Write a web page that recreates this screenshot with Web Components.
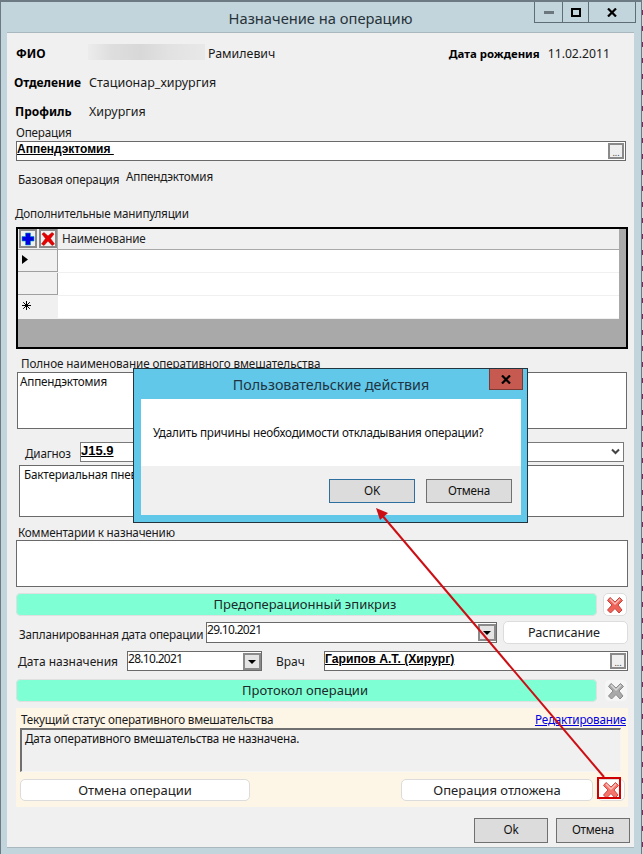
<!DOCTYPE html>
<html lang="ru">
<head>
<meta charset="utf-8">
<title>Назначение на операцию</title>
<style>
  html, body { margin: 0; padding: 0; width: 643px; height: 854px; overflow: hidden; }
  html { background: repeating-linear-gradient(#d8d8d8 0 10px, #7d2a5c 10px 15px, #d8d8d8 15px 16px); }
  body { font: 11.7px "Noto Sans", "Open Sans", sans-serif; letter-spacing: -.2px; color: #111; }
</style>
</head>
<body>

<op-window heading="Назначение на операцию">
  <form-row h="29" top="6">
    <field-text bold size="12" w="72" x="9" style="letter-spacing:0">ФИО</field-text>
    <field-text size="12.4" x="120" style="letter-spacing:0">Рамилевич</field-text>
    <field-text bold size="11.4" x="242" style="margin-left:auto;letter-spacing:0">Дата рождения</field-text>
    <field-text size="12.2" x="8" style="margin-right:24px;letter-spacing:0">11.02.2011</field-text>
  </form-row>
  <form-row h="29">
    <field-text bold size="12" x="7" w="75" style="letter-spacing:0">Отделение</field-text>
    <field-text size="12.5" style="letter-spacing:0">Стационар_хирургия</field-text>
  </form-row>
  <form-row h="29">
    <field-text bold size="12" x="8" w="74" style="letter-spacing:0">Профиль</field-text>
    <field-text size="12.5" style="letter-spacing:0">Хирургия</field-text>
  </form-row>
  <form-row h="14"><field-text x="9">Операция</field-text></form-row>
  <form-row h="20" top="1">
    <lookup-box x="9" w="610" bold>Аппендэктомия&nbsp;</lookup-box>
  </form-row>
  <form-row h="18" top="10">
    <field-text x="11" w="108">Базовая операция</field-text>
    <field-text style="position:relative;top:-3px">Аппендэктомия</field-text>
  </form-row>
  <form-row h="14" top="18"><field-text x="8">Дополнительные манипуляции</field-text></form-row>
  <form-row h="122" top="6"><manip-grid></manip-grid></form-row>
  <form-row h="14" top="8"><field-text x="14" style="letter-spacing:-.1px">Полное наименование оперативного вмешательства</field-text></form-row>
  <form-row h="57" top="1"><text-box x="10" w="610">Аппендэктомия</text-box></form-row>
  <form-row h="20" top="13">
    <field-text x="18" w="55" style="position:relative;top:2px">Диагноз</field-text>
    <combo-box w="544">J15.9</combo-box>
  </form-row>
  <form-row h="52" top="3"><text-box x="12" w="605" style="padding-left:4px">Бактериальная пневмония неуточненная</text-box></form-row>
  <form-row h="14" top="9"><field-text x="11">Комментарии к назначению</field-text></form-row>
  <form-row h="47"><text-box x="9" w="612"></text-box></form-row>
  <form-row h="23" top="6">
    <tint-button x="9" w="581">Предоперационный эпикриз</tint-button>
    <cross-button w="24" style="margin-left:6px"></cross-button>
  </form-row>
  <form-row h="23" top="5">
    <field-text size="11.7" x="12" w="187" style="position:relative;top:1px">Запланированная дата операции</field-text>
    <date-box w="291" style="height:21px">29.10.2021</date-box>
    <plain-button w="125" style="margin-left:6px">Расписание</plain-button>
  </form-row>
  <form-row h="20" top="7">
    <field-text size="12" x="11" w="109" style="position:relative;top:1px;letter-spacing:0">Дата назначения</field-text>
    <date-box w="135">28.10.2021</date-box>
    <field-text size="12" x="14" w="48" style="position:relative;top:1px;letter-spacing:0">Врач</field-text>
    <lookup-box w="304" bold style="font-size:12.2px">Гарипов А.Т. (Хирург)</lookup-box>
  </form-row>
  <form-row h="23" top="8">
    <tint-button x="9" w="581">Протокол операции</tint-button>
    <cross-button w="24" muted style="margin-left:7px"></cross-button>
  </form-row>
  <status-panel></status-panel>
  <form-row h="25" top="11" style="justify-content:flex-end;padding-right:4px">
    <flat-button w="74">Ok</flat-button>
    <flat-button w="74" style="margin-left:8px">Отмена</flat-button>
  </form-row>
</op-window>

<redact-patch></redact-patch>
<confirm-dialog heading="Пользовательские действия">Удалить причины необходимости откладывания операции?</confirm-dialog>
<pointer-arrow></pointer-arrow>

<script>
// red/grey cross used on the small toolbar buttons
const CROSS = (fill, edge) => `<svg width="18" height="18" viewBox="0 0 18 18"><path d="M4 1.500 9 6l4.500-4.500 3 3L12 9l4 5-3 3-4-4.500L4.500 17l-3-3L6 9 1.500 4.500z" fill="${fill}" stroke="${edge}" stroke-width="1"/><path d="M4 3 9 8l5-5" fill="none" stroke="#fff" stroke-opacity=".55" stroke-width="1.500"/></svg>`;

function sizeAttrs(el) {
  const x = el.getAttribute('x');
  const w = el.getAttribute('w');
  const size = el.getAttribute('size');
  if (x) el.style.marginLeft = el.style.marginLeft || x + 'px';
  if (w) el.style.width = w + 'px';
  if (size) el.style.fontSize = size + 'px';
}

class OpWindow extends HTMLElement {
  constructor() {
    super();
    this.attachShadow({ mode: 'open' });
    this.shadowRoot.innerHTML = `
      <style>
        :host { display: block; width: 642px; height: 854px; box-sizing: border-box; background: #c3d5dc; border-top: 2px solid #6c7a83; border-left: 1px solid #6c7a83; border-right: 1px solid #6c7a83; position: relative; padding: 0 7px 0 6px; }
        .title { height: 31px; box-sizing: border-box; display: flex; align-items: center; justify-content: center; font-size: 14.700px; letter-spacing: 0; color: #27333a; padding-top: 1px; }
        .ctl { position: absolute; top: 0; right: 5px; height: 21px; box-sizing: border-box; display: flex; border: 1px solid #5f6d75; border-top: 0; }
        .ctl span { display: flex; align-items: center; justify-content: center; }
        .ctl span + span { border-left: 1px solid #5f6d75; }
        .client { height: 814px; background: #f0f0f0; box-shadow: 0 -1px 0 #a9b8bf, 0 1px 0 #a9b8bf; display: flow-root; }
      </style>
      <div class="title">${this.getAttribute('heading')}</div>
      <div class="ctl">
        <span style="width:27px"><svg width="10" height="3"><rect width="10" height="3" fill="#6b777d"/></svg></span>
        <span style="width:25px"><svg width="10" height="9"><rect x="1" y="1" width="8" height="7" fill="none" stroke="#000" stroke-width="2"/></svg></span>
        <span style="width:46px"><svg width="10" height="9" viewBox="0 0 10 9"><path d="M1 .500 9 8.500M9 .500 1 8.500" stroke="#000" stroke-width="2.200"/></svg></span>
      </div>
      <div class="client"><slot></slot></div>`;
  }
}

class FormRow extends HTMLElement {
  constructor() {
    super();
    this.attachShadow({ mode: 'open' });
    this.shadowRoot.innerHTML = `<style>:host { display: flex; align-items: center; box-sizing: border-box; }</style><slot></slot>`;
  }
  connectedCallback() {
    this.style.height = this.getAttribute('h') + 'px';
    this.style.marginTop = (this.getAttribute('top') || 0) + 'px';
  }
}

class FieldText extends HTMLElement {
  constructor() {
    super();
    this.attachShadow({ mode: 'open' });
    this.shadowRoot.innerHTML = `
      <style>
        :host { display: block; flex: none; white-space: nowrap; font-size: 11.700px; line-height: 14px; margin-bottom: 2px; color: #1a1a1a; }
        :host([size]) { margin-bottom: 0; }
        :host([bold]) { font-weight: 700; color: #000; }
      </style><slot></slot>`;
  }
  connectedCallback() { sizeAttrs(this); }
}

class LookupBox extends HTMLElement {
  constructor() {
    super();
    this.attachShadow({ mode: 'open' });
    this.shadowRoot.innerHTML = `
      <style>
        :host { display: flex; flex: none; height: 20px; box-sizing: border-box; background: #fff; border: 1px solid #6a6a6a; position: relative; font-size: 12px; line-height: 14px; letter-spacing: 0; }
        :host([bold]) .t { font-weight: 700; text-decoration: underline; color: #000; font-family: "Liberation Sans", sans-serif; }
        .dots { position: absolute; right: 1px; top: 1px; width: 16px; height: 16px; box-sizing: border-box; background: #efefef; border: 2px solid #8a8a8a; color: #444; font: 9px/15px "Noto Sans", sans-serif; text-align: center; }
      </style>
      <span class="t"><slot></slot></span><span class="dots">...</span>`;
  }
  connectedCallback() { sizeAttrs(this); }
}

class TextBox extends HTMLElement {
  constructor() {
    super();
    this.attachShadow({ mode: 'open' });
    this.shadowRoot.innerHTML = `
      <style>
        :host { display: block; flex: none; height: 100%; box-sizing: border-box; background: #fff; border: 1px solid #6a6a6a; padding: 1px 2px; font-size: 11.700px; line-height: 14px; color: #111; }
      </style><slot></slot>`;
  }
  connectedCallback() { sizeAttrs(this); }
}

class ComboBox extends HTMLElement {
  constructor() {
    super();
    this.attachShadow({ mode: 'open' });
    this.shadowRoot.innerHTML = `
      <style>
        :host { display: flex; flex: none; height: 20px; box-sizing: border-box; background: #fff; border: 1px solid #7a7a7a; justify-content: space-between; font: 700 13px/16px "Liberation Sans", sans-serif; letter-spacing: 0; text-decoration: underline; color: #000; }
        svg { margin: 5px 3px 0 0; }
      </style>
      <span><slot></slot></span>
      <svg width="9" height="7" viewBox="0 0 9 7"><path d="M1 1.500 4.500 5 8 1.500" fill="none" stroke="#444" stroke-width="2"/></svg>`;
  }
  connectedCallback() { sizeAttrs(this); }
}

class DateBox extends HTMLElement {
  constructor() {
    super();
    this.attachShadow({ mode: 'open' });
    this.shadowRoot.innerHTML = `
      <style>
        :host { display: flex; flex: none; height: 20px; box-sizing: border-box; background: #fff; border: 1px solid #6a6a6a; position: relative; font-size: 12px; letter-spacing: -.7px; line-height: 14px; }
        .b { position: absolute; right: 0; top: 1px; width: 18px; height: 17px; box-sizing: border-box; background: #e4e4e4; border: 2px solid #8a8a8a; display: flex; align-items: center; justify-content: center; }
      </style>
      <span><slot></slot></span>
      <span class="b"><svg width="8" height="4"><path d="M0 0h8L4 4z" fill="#000"/></svg></span>`;
  }
  connectedCallback() { sizeAttrs(this); }
}

class TintButton extends HTMLElement {
  constructor() {
    super();
    this.attachShadow({ mode: 'open' });
    this.shadowRoot.innerHTML = `
      <style>
        :host { display: flex; flex: none; height: 23px; box-sizing: border-box; align-items: center; justify-content: center; padding: 0 3px 2px 0; background: #7fffd4; border-radius: 5px; box-shadow: 0 0 0 1px #e0e0e0 inset; font-size: 13px; letter-spacing: 0; color: #1e2a2a; }
      </style><slot></slot>`;
  }
  connectedCallback() { sizeAttrs(this); }
}

class PlainButton extends HTMLElement {
  constructor() {
    super();
    this.attachShadow({ mode: 'open' });
    this.shadowRoot.innerHTML = `
      <style>
        :host { display: flex; flex: none; height: 23px; box-sizing: border-box; align-items: center; justify-content: center; padding: 0 3px 2px 0; background: #fff; border: 1px solid #dcdcdc; border-radius: 5px; font-size: 12.700px; letter-spacing: 0; color: #222; }
      </style><slot></slot>`;
  }
  connectedCallback() { sizeAttrs(this); }
}

class CrossButton extends HTMLElement {
  constructor() {
    super();
    this.attachShadow({ mode: 'open' });
    const muted = this.hasAttribute('muted');
    this.shadowRoot.innerHTML = `
      <style>
        :host { display: flex; flex: none; height: 23px; box-sizing: border-box; align-items: center; justify-content: center; background: ${muted ? '#f6f6f6' : '#fff'}; border: 1px solid ${muted ? '#f0f0f0' : '#dcdcdc'}; border-radius: 5px; }
      </style>${muted ? CROSS('#a9a9a9', '#8a8a8a') : CROSS('#ee6257', '#c8423a')}`;
  }
  connectedCallback() { sizeAttrs(this); }
}

class FlatButton extends HTMLElement {
  constructor() {
    super();
    this.attachShadow({ mode: 'open' });
    this.shadowRoot.innerHTML = `
      <style>
        :host { display: flex; flex: none; height: 25px; box-sizing: border-box; align-items: center; justify-content: center; padding-bottom: 3px; background: #dcdcdc; border: 1px solid #707070; font-size: 11.700px; color: #111; }
      </style><slot></slot>`;
  }
  connectedCallback() { sizeAttrs(this); }
}

class ManipGrid extends HTMLElement {
  constructor() {
    super();
    this.attachShadow({ mode: 'open' });
    const row = (mark, h, last) => `
      <div class="row" style="height:${h}px">
        <div class="rh${last ? ' last' : ''}">${mark}</div>
        <div class="cell"></div>
      </div>`;
    this.shadowRoot.innerHTML = `
      <style>
        :host { display: block; flex: none; margin-left: 9px; width: 612px; height: 122px; box-sizing: border-box; border: 2px solid #000; background: #a9a9a9; font-size: 11.700px; }
        .head { height: 21px; width: 601px; display: flex; background: #f0f0f0; box-sizing: border-box; border-bottom: 1px solid #a9a9a9; }
        .tools { width: 40px; flex: none; display: flex; gap: 2px; padding: 0 0 0 1px; box-sizing: border-box; border-right: 1px solid #a9a9a9; }
        .tool { width: 18px; height: 19px; box-sizing: border-box; border: 2px solid #8a8a8a; background: #f0f0f0; display: flex; align-items: center; justify-content: center; }
        .name { padding-left: 4px; line-height: 18px; color: #222; }
        .row { display: flex; width: 601px; border-bottom: 1px solid #f0f0f0; box-sizing: border-box; }
        .rh { width: 40px; flex: none; background: #f0f0f0; box-sizing: border-box; border-right: 1px solid #a0a0a0; border-bottom: 1px solid #a0a0a0; padding-left: 4px; height: 100%; line-height: 18px; }
        .rh.last { border: 0; }
        .cell { flex: 1; background: #fff; }
      </style>
      <div class="head">
        <div class="tools">
          <span class="tool"><svg width="14" height="14" viewBox="0 0 14 14"><path d="M4.500 1h5v3.500H13v4.500H9.500v4h-5V9H1V4.500h3.500z" fill="#0000e0" stroke="#00a0c0" stroke-width=".6"/></svg></span>
          <span class="tool"><svg width="14" height="14" viewBox="0 0 14 14"><path d="M1 2 3 .500 7 4l4-3.500L13 2 9.500 6.500 13.500 12 11 13.500 7 9 3 13.500.500 12 4.500 6.500z" fill="#e80000" stroke="#a00000" stroke-width=".5"/></svg></span>
        </div>
        <div class="name">Наименование</div>
      </div>
      ${row('<svg width="6" height="9" style="margin-top:3px"><path d="M0 0l6 4.500L0 9z" fill="#000"/></svg>', 23)}
      ${row('', 23)}
      ${row('<svg width="9" height="9" viewBox="0 0 9 9" style="margin-top:3px"><path d="M4.500 0v9M0 4.500h9M1.200 1.200l6.600 6.600M7.800 1.200 1.200 7.800" stroke="#000" stroke-width="1"/></svg>', 23, true)}`;
  }
}

class StatusPanel extends HTMLElement {
  constructor() {
    super();
    this.attachShadow({ mode: 'open' });
    this.shadowRoot.innerHTML = `
      <style>
        :host { display: block; margin: 6px 0 0 9px; width: 612px; height: 99px; box-sizing: border-box; background: #fdf5e6; padding: 5px 7px 0 4px; font-size: 11.700px; color: #1a1a1a; }
        .top { display: flex; justify-content: space-between; height: 15px; line-height: 13px; padding-left: 1px; }
        a { color: #0000e0; text-decoration: underline; margin-right: -5px; }
        .box { height: 44px; width: 601px; box-sizing: border-box; background: #f0f0f0; border: 1px solid #f5f5f5; border-top: 2px solid #707070; border-left: 2px solid #707070; padding: 1px 3px; line-height: 14px; color: #111; }
        .btns { display: flex; margin-top: 7px; height: 22px; position: relative; }
        .b { height: 22px; box-sizing: border-box; display: flex; align-items: center; justify-content: center; background: #fff; border: 1px solid #dcdcdc; border-radius: 5px; font-size: 13px; letter-spacing: 0; color: #222; flex: none; }
        .hl { position: absolute; left: 577px; top: -2px; width: 24px; height: 22px; box-sizing: border-box; border: 2px solid #d00000; }
      </style>
      <div class="top"><span>Текущий статус оперативного вмешательства</span><a href="#">Редактирование</a></div>
      <div class="box">Дата оперативного вмешательства не назначена.</div>
      <div class="btns">
        <span class="b" style="width:230px">Отмена операции</span>
        <span class="b" style="width:192px;margin-left:151px">Операция отложена</span>
        <span class="b" style="width:28px;margin-left:4px">${CROSS('#f5746c', '#cf4a44')}</span>
        <span class="hl"></span>
      </div>`;
  }
}

// smudge over the hidden part of the surname
class RedactPatch extends HTMLElement {
  constructor() {
    super();
    this.attachShadow({ mode: 'open' });
    this.shadowRoot.innerHTML = `
      <style>
        :host { display: block; position: absolute; left: 88px; top: 44px; width: 117px; height: 16px; background: linear-gradient(90deg, #ececec, #dedede 20%, #d8d8d8 45%, #e2e2e2 70%, #e8e8e8); }
      </style>`;
  }
}

class ConfirmDialog extends HTMLElement {
  constructor() {
    super();
    this.attachShadow({ mode: 'open' });
    this.shadowRoot.innerHTML = `
      <style>
        :host { display: block; position: absolute; left: 133px; top: 368px; width: 395px; height: 155px; box-sizing: border-box; background: #62c8ea; border: 1px solid #24343e; padding: 0 6px 7px 7px; }
        .title { height: 30px; display: flex; align-items: center; justify-content: center; font-size: 14.300px; letter-spacing: 0; color: #1f3440; box-sizing: border-box; }
        .x { position: absolute; top: 0; right: 4px; width: 34px; height: 21px; background: #c75a50; box-sizing: border-box; border: 1px solid #7a3a34; border-top: 0; display: flex; align-items: center; justify-content: center; }
        .body { background: #fff; height: 67px; display: flex; align-items: center; padding-left: 12px; padding-bottom: 1px; box-sizing: border-box; font-size: 11.700px; color: #111; }
        .foot { background: #f0f0f0; height: 49px; display: flex; justify-content: flex-end; gap: 11px; padding: 13px 9px 0 0; box-sizing: border-box; }
        .btn { width: 86px; height: 24px; box-sizing: border-box; display: flex; align-items: center; justify-content: center; padding-bottom: 3px; background: #dcdcdc; border: 1px solid #707070; font-size: 11.700px; color: #111; }
        .btn.def { border-color: #2f6f9f; }
      </style>
      <div class="title">${this.getAttribute('heading')}</div>
      <div class="x"><svg width="10" height="9" viewBox="0 0 10 9"><path d="M1 .500 9 8.500M9 .500 1 8.500" stroke="#000" stroke-width="2.200"/></svg></div>
      <div class="body"><slot></slot></div>
      <div class="foot"><div class="btn def">OK</div><div class="btn">Отмена</div></div>`;
  }
}

class PointerArrow extends HTMLElement {
  constructor() {
    super();
    this.attachShadow({ mode: 'open' });
    this.shadowRoot.innerHTML = `
      <style>:host { display: block; position: absolute; left: 0; top: 0; width: 643px; height: 854px; pointer-events: none; }</style>
      <svg width="643" height="854"><path d="M604 777 381 514" stroke="#cc0f14" stroke-width="2" fill="none"/><path d="M376 508 388 513 380 520z" fill="#cc0f14"/></svg>`;
  }
}

customElements.define('op-window', OpWindow);
customElements.define('form-row', FormRow);
customElements.define('field-text', FieldText);
customElements.define('lookup-box', LookupBox);
customElements.define('text-box', TextBox);
customElements.define('combo-box', ComboBox);
customElements.define('date-box', DateBox);
customElements.define('tint-button', TintButton);
customElements.define('plain-button', PlainButton);
customElements.define('cross-button', CrossButton);
customElements.define('flat-button', FlatButton);
customElements.define('manip-grid', ManipGrid);
customElements.define('status-panel', StatusPanel);
customElements.define('redact-patch', RedactPatch);
customElements.define('confirm-dialog', ConfirmDialog);
customElements.define('pointer-arrow', PointerArrow);
</script>
</body>
</html>
